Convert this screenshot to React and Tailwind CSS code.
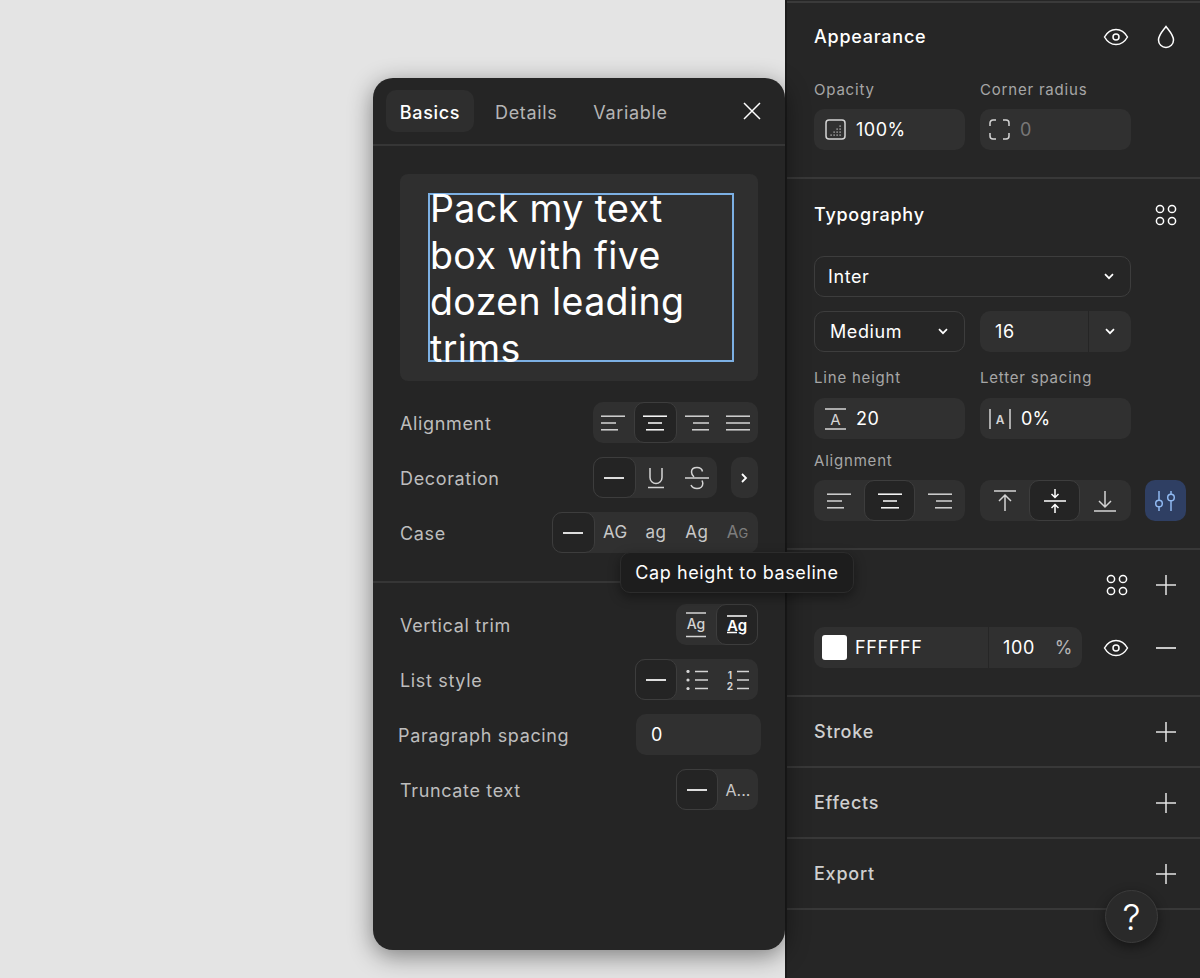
import clsx from 'clsx';

const FONT = { fontFamily: 'Inter' };

function Line({ x1, y1, x2, y2, w = 1.5 }) {
  return <line x1={x1} y1={y1} x2={x2} y2={y2} strokeWidth={w} />;
}

function Icon({ w, h, className = 'text-[#d4d4d4]', children }) {
  return (
    <svg width={w} height={h} viewBox={`0 0 ${w} ${h}`} fill="none" stroke="currentColor" strokeWidth="1.5" className={clsx('shrink-0', className)}>
      {children}
    </svg>
  );
}

const ALIGN = {
  left: [[0, 24], [0, 15], [0, 17]],
  center: [[0, 24], [5, 19], [3, 21]],
  right: [[0, 24], [8, 24], [7, 24]],
  justify: [[0, 24], [0, 24], [0, 24]],
};

function AlignIcon({ kind, className }) {
  return (
    <Icon w={24} h={16} className={className}>
      {ALIGN[kind].map(([a, b], i) => (
        <Line key={i} x1={a} y1={1.2 + i * 6.8} x2={b} y2={1.2 + i * 6.8} />
      ))}
    </Icon>
  );
}

function Dash() {
  return (
    <Icon w={20} h={4} className="text-white">
      <Line x1={0} y1={2} x2={20} y2={2} w={1.7} />
    </Icon>
  );
}

function Underline() {
  return (
    <Icon w={18} h={22}>
      <path d="M3 1v9.5a6 6 0 0 0 12 0V1" />
      <Line x1={1} y1={20.5} x2={17} y2={20.5} />
    </Icon>
  );
}

function Strike() {
  return (
    <Icon w={24} h={24}>
      <path d="M17.5 5.5C17 3 15 1.5 12 1.5S6.5 3 6.5 6c0 1.800 .8 3.500 2.500 5" />
      <path d="M17 14.500c.5 1 .8 2 .8 3 0 3-2.500 5-5.800 5-3 0-5-1.200-6-3.500" />
      <Line x1={0} y1={12} x2={24} y2={12} />
    </Icon>
  );
}

function CaseLabel({ children }) {
  return <span className="text-[17px] tracking-[0.4px] text-[#c8c8c8]">{children}</span>;
}

function SmallG() {
  return (
    <span className="text-[17px] text-[#7d7d7d]">
      A<span className="text-[13px]">G</span>
    </span>
  );
}

function TrimAll() {
  return (
    <Icon w={22} h={26}>
      <Line x1={1} y1={1} x2={21} y2={1} />
      <text x="11" y="17" textAnchor="middle" fontSize="14" fontWeight="500" fill="currentColor" stroke="none" style={FONT}>Ag</text>
      <Line x1={1} y1={24.500} x2={21} y2={24.500} />
    </Icon>
  );
}

function TrimCap() {
  return (
    <Icon w={22} h={22} className="text-white">
      <Line x1={1} y1={2} x2={21} y2={2} />
      <text x="11" y="16.500" textAnchor="middle" fontSize="15" fontWeight="600" fill="currentColor" stroke="none" style={FONT}>Ag</text>
      <Line x1={1} y1={18.500} x2={11} y2={18.500} />
    </Icon>
  );
}

function Bullets() {
  return (
    <Icon w={22} h={20}>
      {[1.500, 10, 18.500].map((y) => (
        <g key={y}>
          <circle cx="2" cy={y} r="1.600" fill="currentColor" stroke="none" />
          <Line x1={9} y1={y} x2={22} y2={y} />
        </g>
      ))}
    </Icon>
  );
}

function Numbers() {
  return (
    <Icon w={22} h={20}>
      <text x="3" y="8.500" textAnchor="middle" fontSize="10" fontWeight="700" fill="currentColor" stroke="none" style={FONT}>1</text>
      <text x="3" y="19.500" textAnchor="middle" fontSize="10" fontWeight="700" fill="currentColor" stroke="none" style={FONT}>2</text>
      {[1.500, 10, 18.500].map((y) => (
        <Line key={y} x1={10} y1={y} x2={22} y2={y} />
      ))}
    </Icon>
  );
}

function Eye() {
  return (
    <Icon w={26} h={18} className="text-white">
      <path d="M1.500 9C4.500 3.800 8.500 1.500 13 1.500S21.500 3.800 24.500 9C21.500 14.200 17.500 16.500 13 16.500S4.500 14.200 1.500 9Z" />
      <circle cx="13" cy="9" r="3" />
    </Icon>
  );
}

function Drop() {
  return (
    <Icon w={18} h={24} className="text-white">
      <path d="M9 1.500C6 5.500 1.500 10 1.500 15a7.500 7.500 0 0 0 15 0C16.500 10 12 5.500 9 1.500Z" />
    </Icon>
  );
}

function Dots() {
  return (
    <Icon w={22} h={22} className="text-white">
      <circle cx="5" cy="5" r="3.600" />
      <circle cx="17" cy="5" r="3.600" />
      <circle cx="5" cy="17" r="3.600" />
      <circle cx="17" cy="17" r="3.600" />
    </Icon>
  );
}

function Plus() {
  return (
    <Icon w={22} h={22} className="text-[#e4e4e4]">
      <Line x1={1} y1={11} x2={21} y2={11} />
      <Line x1={11} y1={1} x2={11} y2={21} />
    </Icon>
  );
}

function Chevron({ className = 'text-white' }) {
  return (
    <Icon w={10} h={7} className={className}>
      <path d="M1 1.200 5 5.200 9 1.200" strokeWidth="1.700" />
    </Icon>
  );
}

function OpacityIcon() {
  const dots = [[15, 7], [12, 10], [15, 10], [9, 13], [12, 13], [15, 13], [6, 16], [9, 16], [12, 16], [15, 16]];
  return (
    <Icon w={21} h={21}>
      <rect x="1" y="1" width="19" height="19" rx="3" />
      {dots.map(([x, y]) => (
        <rect key={`${x}-${y}`} x={x - 0.5} y={y - 0.5} width="1.200" height="1.200" fill="currentColor" stroke="none" />
      ))}
    </Icon>
  );
}

function CornerIcon() {
  return (
    <Icon w={21} h={21}>
      <path d="M1 7V4a3 3 0 0 1 3-3h3M14 1h3a3 3 0 0 1 3 3v3M20 14v3a3 3 0 0 1-3 3h-3M7 20H4a3 3 0 0 1-3-3v-3" />
    </Icon>
  );
}

function LineHeightIcon() {
  return (
    <Icon w={21} h={22}>
      <Line x1={0} y1={1} x2={21} y2={1} />
      <text x="10.500" y="17" textAnchor="middle" fontSize="15" fill="currentColor" stroke="none" style={FONT}>A</text>
      <Line x1={0} y1={21} x2={21} y2={21} />
    </Icon>
  );
}

function LetterSpacingIcon() {
  return (
    <Icon w={22} h={20}>
      <Line x1={1} y1={0} x2={1} y2={20} />
      <text x="11" y="15" textAnchor="middle" fontSize="12" fontWeight="600" fill="currentColor" stroke="none" style={FONT}>A</text>
      <Line x1={21} y1={0} x2={21} y2={20} />
    </Icon>
  );
}

function VTop() {
  return (
    <Icon w={22} h={22}>
      <Line x1={0} y1={1} x2={22} y2={1} />
      <path d="M11 21V5M5 11l6-6 6 6" />
    </Icon>
  );
}

function VMiddle() {
  return (
    <Icon w={22} h={26} className="text-white">
      <Line x1={0} y1={13} x2={22} y2={13} />
      <path d="M11 1v8M7.500 6 11 9.500 14.500 6M11 25v-8M7.500 20 11 16.500 14.500 20" />
    </Icon>
  );
}

function VBottom() {
  return (
    <Icon w={22} h={22}>
      <Line x1={0} y1={21} x2={22} y2={21} />
      <path d="M11 1v16M5 11l6 6 6-6" />
    </Icon>
  );
}

function Sliders() {
  return (
    <Icon w={22} h={22} className="text-[#8fb8f0]">
      <path d="M4 1v9M4 17v4M16 1v3M16 11v10" />
      <circle cx="4" cy="13.500" r="3.300" />
      <circle cx="16" cy="7.500" r="3.300" />
    </Icon>
  );
}

function Close() {
  return (
    <Icon w={18} h={18} className="text-white">
      <path d="M1 1l16 16M17 1 1 17" />
    </Icon>
  );
}

function Seg({ items, active, className }) {
  return (
    <div className={clsx('flex h-[41px] rounded-[10px] bg-[#303030]', className)}>
      {items.map((item, i) => (
        <div
          key={i}
          className={clsx(
            'flex h-full flex-1 items-center justify-center rounded-[10px]',
            i === active && 'border-[1.5px] border-[#3d3d3d] bg-[#242424]',
          )}
        >
          {item}
        </div>
      ))}
    </div>
  );
}

function DialogRow({ label, children }) {
  return (
    <div className="flex h-[41px] items-center justify-between">
      <span className="mt-[2px] text-[18px] tracking-[0.65px] text-[#bdbdbd]">{label}</span>
      {children}
    </div>
  );
}

function Dialog() {
  return (
    <div className="absolute top-[78px] left-[373px] z-10 flex h-[872px] w-[412px] flex-col rounded-[20px] bg-[#252525] shadow-[0_6px_24px_rgba(0,0,0,0.45)]">
      <div className="flex h-[68px] items-center border-b-2 border-[#363636] pr-[24px] pl-[13px] text-[18px] tracking-[0.65px]">
        <div className="flex h-[42px] w-[88px] items-center justify-center rounded-[10px] bg-[#2e2e2e] font-medium text-white">
          <span className="mt-[2px]">Basics</span>
        </div>
        <span className="mt-[2px] ml-[21px] text-[#b5b5b5]">Details</span>
        <span className="mt-[2px] ml-[36px] text-[#b5b5b5]">Variable</span>
        <div className="ml-auto">
          <Close />
        </div>
      </div>

      <div className="mx-[27px] mt-[28px] h-[207px] rounded-[8px] bg-[#2f2f2f] pt-[19px] pl-[28px]">
        <div className="h-[169px] w-[306px] border-2 border-[#7cb0e4]">
          <div className="-mt-[9px] text-[37.500px] leading-[46.500px] tracking-[0.4px] text-white">
            Pack my text
            <br />
            box with five
            <br />
            dozen leading
            <br />
            trims
          </div>
        </div>
      </div>

      <div className="mx-[27px] mt-[21px] flex flex-col gap-[14px]">
        <DialogRow label="Alignment">
          <Seg
            className="w-[165px]"
            active={1}
            items={[
              <AlignIcon key="l" kind="left" />,
              <AlignIcon key="c" kind="center" className="text-white" />,
              <AlignIcon key="r" kind="right" />,
              <AlignIcon key="j" kind="justify" />,
            ]}
          />
        </DialogRow>
        <DialogRow label="Decoration">
          <div className="flex gap-[14px]">
            <Seg className="w-[124px]" active={0} items={[<Dash key="d" />, <Underline key="u" />, <Strike key="s" />]} />
            <div className="flex h-[41px] w-[27px] items-center justify-center rounded-[10px] bg-[#303030]">
              <Icon w={7} h={10} className="text-white">
                <path d="M1 1l4 4-4 4" strokeWidth="1.800" />
              </Icon>
            </div>
          </div>
        </DialogRow>
        <DialogRow label="Case">
          <Seg
            className="w-[206px]"
            active={0}
            items={[
              <Dash key="d" />,
              <CaseLabel key="u">AG</CaseLabel>,
              <CaseLabel key="l">ag</CaseLabel>,
              <CaseLabel key="t">Ag</CaseLabel>,
              <SmallG key="s" />,
            ]}
          />
        </DialogRow>
      </div>

      <div className="mt-[28px] h-[2px] bg-[#363636]" />

      <div className="mx-[27px] mt-[21px] flex flex-col gap-[14px]">
        <DialogRow label="Vertical trim">
          <Seg className="w-[82px]" active={1} items={[<TrimAll key="a" />, <TrimCap key="c" />]} />
        </DialogRow>
        <DialogRow label="List style">
          <Seg className="w-[123px]" active={0} items={[<Dash key="d" />, <Bullets key="b" />, <Numbers key="n" />]} />
        </DialogRow>
        <div className="-ml-[2px] flex h-[41px] items-center justify-between">
          <span className="mt-[2px] text-[18px] tracking-[0.65px] text-[#bdbdbd]">Paragraph spacing</span>
          <div className="-mr-[3px] flex h-[41px] w-[125px] items-center rounded-[10px] bg-[#303030] pl-[15px] text-[18px] text-white">0</div>
        </div>
        <DialogRow label="Truncate text">
          <Seg
            className="w-[82px]"
            active={0}
            items={[<Dash key="d" />, <span key="t" className="text-[16px] text-[#c8c8c8]">A...</span>]}
          />
        </DialogRow>
      </div>
    </div>
  );
}

function Field({ icon, value, muted, tight }) {
  return (
    <div className={clsx('flex h-[41px] items-center gap-[10px] rounded-[10px] bg-[#303030]', tight ? 'pl-[9px]' : 'pl-[11px]')}>
      {icon}
      <span className={clsx('text-[18px]', tight ? 'tracking-[0.2px]' : 'tracking-[0.5px]', muted ? 'text-[#777777]' : 'text-white')}>{value}</span>
    </div>
  );
}

function Label({ children }) {
  return <div className="h-[18px] text-[15px] leading-[18px] tracking-[0.8px] text-[#a6a6a6]">{children}</div>;
}

function IconCell({ children }) {
  return <div className="flex h-[41px] w-[41px] items-center justify-center">{children}</div>;
}

function SectionHead({ title, strong, children }) {
  return (
    <div className="flex h-[41px] items-center justify-between">
      <span className={clsx('text-[18px] font-medium tracking-[0.75px]', strong ? 'text-white' : 'text-[#cfcfcf]')}>{title}</span>
      <div className="flex gap-[9px]">{children}</div>
    </div>
  );
}

function Panel() {
  return (
    <div className="flex h-full w-[415px] shrink-0 flex-col border-l-2 border-[#1c1c1c] bg-[#262626] pt-[1px]">
      <div className="flex h-[178px] flex-col border-t-2 border-b-2 border-t-[#3a3a3a] border-b-[#383838] pt-[13px] pr-[14px] pl-[27px]">
        <SectionHead title="Appearance" strong>
          <IconCell><Eye /></IconCell>
          <IconCell><Drop /></IconCell>
        </SectionHead>
        <div className="mt-[24px] grid w-[317px] grid-cols-2 gap-x-[15px]">
          <Label>Opacity</Label>
          <Label>Corner radius</Label>
        </div>
        <div className="mt-[10px] grid w-[317px] grid-cols-2 gap-x-[15px]">
          <Field icon={<OpacityIcon />} value="100%" />
          <Field icon={<CornerIcon />} value="0" muted tight />
        </div>
      </div>

      <div className="flex h-[371px] flex-col border-b-2 border-[#383838] pt-[15px] pr-[14px] pl-[27px]">
        <SectionHead title="Typography" strong>
          <IconCell><Dots /></IconCell>
        </SectionHead>
        <div className="mt-[21px] flex h-[41px] w-[317px] items-center justify-between rounded-[10px] border-[1.5px] border-[#3d3d3d] pr-[16px] pl-[13px] text-[18px] tracking-[0.6px] text-white">
          Inter
          <Chevron />
        </div>
        <div className="mt-[14px] grid w-[317px] grid-cols-2 gap-x-[15px]">
          <div className="flex h-[41px] items-center justify-between rounded-[10px] border-[1.5px] border-[#3d3d3d] pr-[16px] pl-[15px] text-[18px] tracking-[0.6px] text-white">
            Medium
            <Chevron />
          </div>
          <div className="flex h-[41px] rounded-[10px] bg-[#303030] text-[18px] tracking-[0.6px] text-white">
            <div className="flex flex-1 items-center border-r border-[#252525] pl-[15px]">16</div>
            <div className="flex w-[42px] items-center justify-center">
              <Chevron />
            </div>
          </div>
        </div>
        <div className="mt-[17px] grid w-[317px] grid-cols-2 gap-x-[15px]">
          <Label>Line height</Label>
          <Label>Letter spacing</Label>
        </div>
        <div className="mt-[11px] grid w-[317px] grid-cols-2 gap-x-[15px]">
          <Field icon={<LineHeightIcon />} value="20" />
          <Field icon={<LetterSpacingIcon />} value="0%" tight />
        </div>
        <div className="mt-[13px]">
          <Label>Alignment</Label>
        </div>
        <div className="mt-[10px] flex">
          <Seg
            className="w-[151px]"
            active={1}
            items={[
              <AlignIcon key="l" kind="left" />,
              <AlignIcon key="c" kind="center" className="text-white" />,
              <AlignIcon key="r" kind="right" />,
            ]}
          />
          <Seg className="ml-[15px] w-[151px] pr-[2px]" active={1} items={[<VTop key="t" />, <VMiddle key="m" />, <VBottom key="b" />]} />
          <div className="ml-[14px] flex h-[41px] w-[41px] items-center justify-center rounded-[10px] bg-[#2f3f63]">
            <Sliders />
          </div>
        </div>
      </div>

      <div className="flex h-[147px] flex-col border-b-2 border-[#383838] pt-[14px] pr-[14px] pl-[27px]">
        <div className="flex h-[41px] justify-end gap-[8px]">
          <IconCell><Dots /></IconCell>
          <IconCell><Plus /></IconCell>
        </div>
        <div className="mt-[22px] flex items-center">
          <div className="flex h-[41px] w-[269px] rounded-[10px] bg-[#303030] text-[18px] tracking-[0.6px] text-white">
            <div className="flex w-[175px] items-center gap-[8px] border-r border-[#262626] pl-[8px]">
              <div className="h-[25px] w-[25px] rounded-[3px] bg-white" />
              FFFFFF
            </div>
            <div className="flex flex-1 items-center pl-[14px]">
              100
              <span className="ml-[20px] text-[#b5b5b5]">%</span>
            </div>
          </div>
          <div className="ml-[13px] flex gap-[9px]">
            <IconCell><Eye /></IconCell>
            <IconCell>
              <Icon w={22} h={4} className="text-white">
                <Line x1={1} y1={2} x2={21} y2={2} />
              </Icon>
            </IconCell>
          </div>
        </div>
      </div>

      {['Stroke', 'Effects', 'Export'].map((title) => (
        <div key={title} className="flex h-[71px] items-center border-b-2 border-[#383838] pr-[14px] pl-[27px]">
          <div className="w-full">
            <SectionHead title={title}>
              <IconCell><Plus /></IconCell>
            </SectionHead>
          </div>
        </div>
      ))}
    </div>
  );
}

export default function App() {
  return (
    <div className="relative flex h-[978px] w-[1200px] overflow-hidden bg-[#e4e4e4]" style={FONT}>
      <div className="flex-1" />
      <Panel />
      <Dialog />
      <div className="absolute top-[552px] left-[620px] z-20 flex h-[41px] w-[234px] items-center justify-center rounded-[10px] border border-[#2c2c2c] bg-[#1d1d1d] text-[18px] tracking-[0.6px] text-white shadow-[0_4px_12px_rgba(0,0,0,0.4)]">
        Cap height to baseline
      </div>
      <div className="absolute top-[890px] left-[1105px] z-20 flex h-[53px] w-[53px] items-center justify-center rounded-full border border-[#3c3c3c] bg-[#2a2a2a] text-[36px] font-light text-white shadow-[0_4px_12px_rgba(0,0,0,0.45)]">
        ?
      </div>
    </div>
  );
}
